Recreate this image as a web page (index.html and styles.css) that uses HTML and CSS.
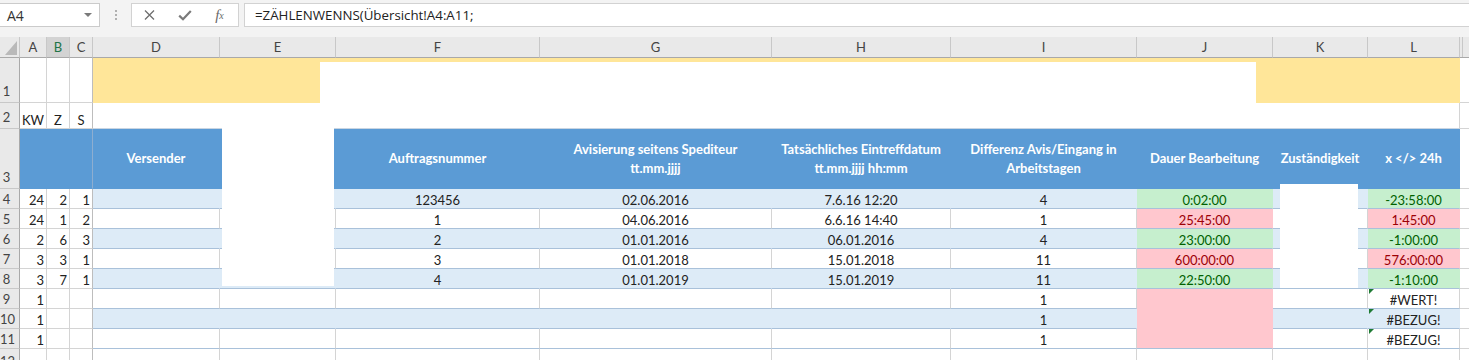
FILE: index.html
```html
<!DOCTYPE html>
<html lang="de">
  <head>
    <meta charset="UTF-8" />
    <meta name="viewport" content="width=device-width, initial-scale=1.0" />
    <title>Übersicht</title>
    <link rel="stylesheet" href="styles.css">
  </head>

  <body>
    <div class="fbar">
      <div class="namebox"><span>A4</span><span class="caret"></span></div>
      <div class="grip"><i></i><i></i><i></i></div>
      <div class="fxbox">
        <span class="ib">
          <svg width="11" height="10" viewBox="0 0 11 10"><path d="M1 0.5l9 9M10 0.5l-9 9" stroke="#6e6e6e" stroke-width="1.3" fill="none"/></svg>
        </span>
        <span class="ib">
          <svg width="14" height="11" viewBox="0 0 14 11"><path d="M1.2 5.6l3.8 3.6 7.8-8.2" stroke="#7a7a7a" stroke-width="2.2" fill="none"/></svg>
        </span>
        <span class="ib fx"><i>f</i><sub>x</sub></span>
      </div>
      <div class="formula">=ZÄHLENWENNS(Übersicht!A4:A11;</div>
    </div>

    <div class="wrap">
      <table class="sheet">
        <colgroup>
          <col style="width:20px"><col style="width:27px"><col style="width:23px"><col style="width:23px">
          <col style="width:127px"><col style="width:116px"><col style="width:204px"><col style="width:232px">
          <col style="width:179px"><col style="width:186px"><col style="width:136px"><col style="width:95px">
          <col style="width:92px"><col style="width:9px">
        </colgroup>
        <thead>
          <tr class="colhead">
            <th class="corner"><span class="tri"></span></th>
            <th>A</th><th class="sel">B</th><th>C</th><th>D</th><th>E</th><th>F</th>
            <th>G</th><th>H</th><th>I</th><th>J</th><th>K</th><th>L</th><th class="colm"></th>
          </tr>
        </thead>
        <tbody>
          <tr class="r1">
            <th class="rh tall">1</th>
            <td></td><td></td><td class="c"></td>
            <td class="title" colspan="9"></td><td class="m"></td>
          </tr>
          <tr class="r2">
            <th class="rh tall">2</th>
            <td class="ctr">KW</td><td class="ctr">Z</td><td class="ctr c">S</td>
            <td class="blank" colspan="9"></td><td class="m"></td>
          </tr>
          <tr class="r3">
            <th class="rh tall">3</th>
            <td class="hd hdl" colspan="3"></td>
            <td class="hd">Versender</td>
            <td class="hd"></td>
            <td class="hd">Auftragsnummer</td>
            <td class="hd">Avisierung seitens Spediteur<br>tt.mm.jjjj</td>
            <td class="hd">Tatsächliches Eintreffdatum<br>tt.mm.jjjj hh:mm</td>
            <td class="hd">Differenz Avis/Eingang in<br>Arbeitstagen</td>
            <td class="hd">Dauer Bearbeitung</td>
            <td class="hd">Zuständigkeit</td>
            <td class="hd">x &lt;/&gt; 24h</td>
            <td class="m"></td>
          </tr>
          <tr class="row">
            <th class="rh">4</th>
            <td class="n">24</td><td class="n">2</td><td class="n c">1</td>
            <td class="b"></td><td class="b"></td><td class="b">123456</td><td class="b">02.06.2016</td>
            <td class="b">7.6.16 12:20</td><td class="b">4</td><td class="ok">0:02:00</td><td class="b"></td>
            <td class="ok">-23:58:00</td><td class="m"></td>
          </tr>
          <tr class="row">
            <th class="rh">5</th>
            <td class="n">24</td><td class="n">1</td><td class="n c">2</td>
            <td class="w"></td><td class="w"></td><td class="w">1</td><td class="w">04.06.2016</td>
            <td class="w">6.6.16 14:40</td><td class="w">1</td><td class="bad">25:45:00</td><td class="w"></td>
            <td class="bad">1:45:00</td><td class="m"></td>
          </tr>
          <tr class="row">
            <th class="rh">6</th>
            <td class="n">2</td><td class="n">6</td><td class="n c">3</td>
            <td class="b"></td><td class="b"></td><td class="b">2</td><td class="b">01.01.2016</td>
            <td class="b">06.01.2016</td><td class="b">4</td><td class="ok">23:00:00</td><td class="b"></td>
            <td class="ok">-1:00:00</td><td class="m"></td>
          </tr>
          <tr class="row">
            <th class="rh">7</th>
            <td class="n">3</td><td class="n">3</td><td class="n c">1</td>
            <td class="w"></td><td class="w"></td><td class="w">3</td><td class="w">01.01.2018</td>
            <td class="w">15.01.2018</td><td class="w">11</td><td class="bad">600:00:00</td><td class="w"></td>
            <td class="bad">576:00:00</td><td class="m"></td>
          </tr>
          <tr class="row">
            <th class="rh">8</th>
            <td class="n">3</td><td class="n">7</td><td class="n c">1</td>
            <td class="b"></td><td class="b"></td><td class="b">4</td><td class="b">01.01.2019</td>
            <td class="b">15.01.2019</td><td class="b">11</td><td class="ok">22:50:00</td><td class="b"></td>
            <td class="ok">-1:10:00</td><td class="m"></td>
          </tr>
          <tr class="row">
            <th class="rh">9</th>
            <td class="n">1</td><td class="n"></td><td class="n c"></td>
            <td class="w"></td><td class="w"></td><td class="w"></td><td class="w"></td>
            <td class="w"></td><td class="w">1</td><td class="bad pk"></td><td class="w"></td>
            <td class="w err">#WERT!</td><td class="m"></td>
          </tr>
          <tr class="row">
            <th class="rh">10</th>
            <td class="n">1</td><td class="n"></td><td class="n c"></td>
            <td class="b"></td><td class="b"></td><td class="b"></td><td class="b"></td>
            <td class="b"></td><td class="b">1</td><td class="bad pk"></td><td class="b"></td>
            <td class="b err">#BEZUG!</td><td class="m"></td>
          </tr>
          <tr class="row">
            <th class="rh">11</th>
            <td class="n">1</td><td class="n"></td><td class="n c"></td>
            <td class="w"></td><td class="w"></td><td class="w"></td><td class="w"></td>
            <td class="w"></td><td class="w">1</td><td class="bad"></td><td class="w"></td>
            <td class="w err">#BEZUG!</td><td class="m"></td>
          </tr>
          <tr class="row last">
            <th class="rh">12</th>
            <td></td><td></td><td class="c"></td>
            <td></td><td></td><td></td><td></td><td></td><td></td><td></td><td></td><td></td><td class="m"></td>
          </tr>
        </tbody>
      </table>

      <!-- pasted white pictures lying over the sheet -->
      <div class="patch patch-title"></div>
      <div class="patch patch-e"></div>
      <div class="patch patch-k"></div>
    </div>
  </body>
</html>
```

FILE: styles.css
```css
body {
  margin: 0;
  font-family: "Lato", "Liberation Sans", sans-serif;
  font-size: 13px;
  color: #222;
  background: #fff;
  overflow: hidden;
}

/* formula bar */
.fbar {
  display: flex;
  align-items: flex-start;
  height: 37px;
  padding-top: 3px;
  box-sizing: border-box;
  background: #f3f3f3;
}
.namebox {
  display: flex;
  align-items: center;
  justify-content: space-between;
  width: 101px;
  height: 24px;
  margin-left: -1px;
  padding: 0 7px 0 7px;
  box-sizing: border-box;
  background: #fff;
  border: 1px solid #cbcbcb;
  font-family: "Open Sans", sans-serif;
  font-size: 14px;
  color: #333;
}
.caret {
  border-left: 4px solid transparent;
  border-right: 4px solid transparent;
  border-top: 4px solid #7a7a7a;
}
.grip {
  display: flex;
  flex-direction: column;
  align-items: center;
  gap: 2px;
  width: 31px;
  padding-top: 7px;
}
.grip i {
  width: 2px;
  height: 2px;
  background: #b0b0b0;
}
.fxbox {
  display: flex;
  width: 108px;
  height: 24px;
  box-sizing: border-box;
  background: #fff;
  border: 1px solid #d2d2d2;
}
.ib {
  display: flex;
  align-items: center;
  justify-content: center;
  width: 35px;
}
.fx {
  font-family: "Liberation Serif", serif;
  font-style: italic;
  font-size: 15px;
  color: #6a6a6a;
}
.fx sub {
  font-size: 10px;
  vertical-align: -2px;
}
.formula {
  flex: 1;
  height: 24px;
  margin-left: 5px;
  padding-left: 10px;
  box-sizing: border-box;
  background: #fff;
  border: 1px solid #d2d2d2;
  border-right: none;
  line-height: 22px;
  font-family: "Open Sans", sans-serif;
  font-size: 13.3px;
  color: #222;
}

/* sheet */
.wrap {
  position: relative;
}
.sheet {
  border-collapse: separate;
  border-spacing: 0;
  table-layout: fixed;
  width: 1469px;
}
.sheet th,
.sheet td {
  padding: 0;
  border: 0 solid #d4d4d4;
  border-right-width: 1px;
  border-bottom-width: 1px;
  white-space: nowrap;
  overflow: hidden;
  font-weight: normal;
  line-height: 15px;
  vertical-align: bottom;
}

.colhead th {
  height: 20px;
  background: #e9e9e9;
  border-right-color: #c8c8c8;
  border-bottom-color: #a9a9a9;
  color: #444;
  text-align: center;
  vertical-align: middle;
}
.colhead .sel {
  background: #d3d3d3;
  color: #217346;
}
.colhead .colm {
  border-right: none;
  background: linear-gradient(to right, #e9e9e9 2px, #c8c8c8 2px, #c8c8c8 3px, #e9e9e9 3px);
}
.corner .tri {
  display: block;
  width: 0;
  height: 0;
  margin: 2px 2px 0 auto;
  border-left: 12px solid transparent;
  border-bottom: 14px solid #b9b9b9;
}

.rh {
  background: #e9e9e9;
  color: #444;
  text-align: center;
  padding-right: 6px !important;
  padding-bottom: 1px !important;
  border-right-color: #a9a9a9 !important;
  border-bottom-color: #c8c8c8 !important;
}
.rh.tall {
  padding-bottom: 3px !important;
}
.last .rh {
  vertical-align: top;
  padding-top: 5px !important;
}

.r1 { height: 45px; }
.r2 { height: 26px; }
.r3 { height: 60px; }
.row { height: 20px; }

.ctr { text-align: center; }
.n {
  text-align: right;
  padding-right: 2px !important;
}
.c { border-right-color: #bdbdbd !important; }
.m {
  border-right: none !important;
}

.title {
  background: #ffe699;
  border-right-color: #ffe699 !important;
  border-bottom-color: #ffe699 !important;
}
.blank {
  border-bottom-color: #c9d5e2 !important;
}

.sheet .hd {
  background: #5b9bd5;
  color: #fff;
  font-weight: 700;
  text-align: center;
  line-height: 19px;
  vertical-align: middle;
  border-right-color: #5b9bd5;
  border-bottom-color: #5b9bd5;
}
.sheet .hdl { border-right-color: #8eaed0; }

.w,
.b,
.ok,
.bad {
  text-align: center;
  border-bottom-color: #a9c1da !important;
}
.w { border-right-color: #d4d4d4; }
.b {
  background: #ddebf7;
  border-right-color: #ddebf7 !important;
}
.ok {
  background: #c6efce;
  color: #006100;
  border-right-color: #c6efce !important;
}
.bad {
  background: #ffc7ce;
  color: #9c0006;
  border-right-color: #ffc7ce !important;
}
.bad.pk { border-bottom-color: #ffc7ce !important; }

.err {
  position: relative;
}
.err::before {
  content: "";
  position: absolute;
  left: 1px;
  top: 0;
  border-top: 5px solid #1e7b34;
  border-right: 5px solid transparent;
}

.patch {
  position: absolute;
  background: #fff;
}
.patch-title {
  left: 320px;
  top: 25px;
  width: 936px;
  height: 65px;
}
.patch-e {
  left: 222px;
  top: 90px;
  width: 112px;
  height: 159px;
}
.patch-k {
  left: 1280px;
  top: 147px;
  width: 78px;
  height: 104px;
}
```
